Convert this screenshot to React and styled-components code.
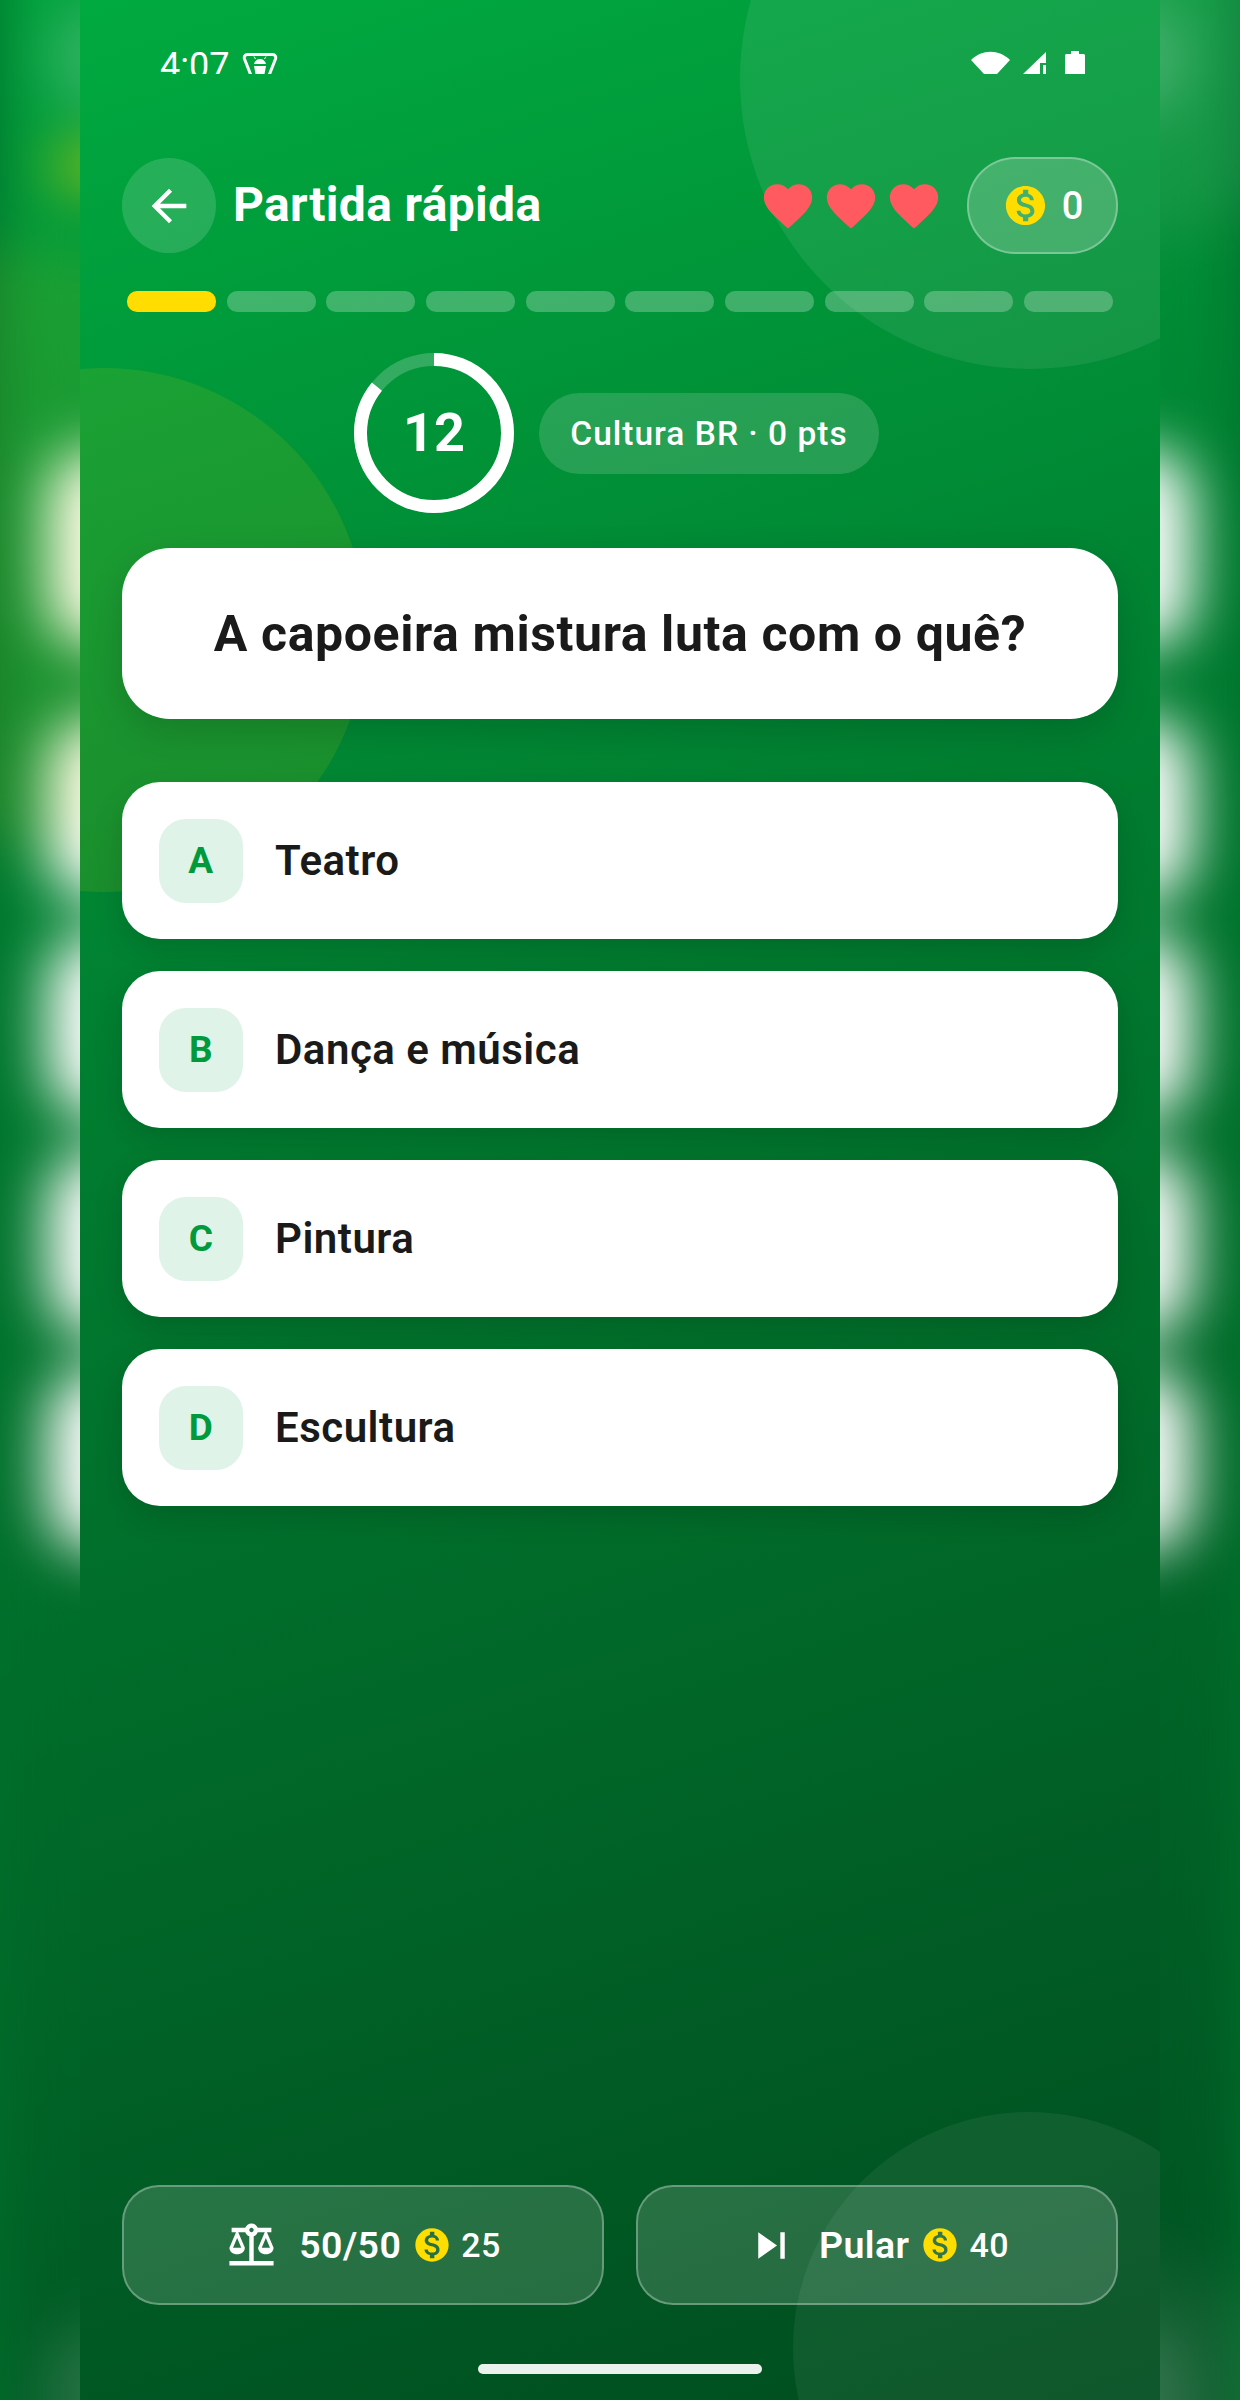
import styled, { createGlobalStyle } from 'styled-components'

const GlobalStyle = createGlobalStyle`
  html, body {
    margin: 0;
    padding: 0;
    height: 2400px;
    overflow: hidden;
    background: #00702c;
    font-family: Roboto, "Noto Sans", sans-serif;
  }
  * {
    box-sizing: border-box;
  }
`

const screenGradient = 'linear-gradient(162deg, #00aa40 0%, #007d30 40%, #004d1f 100%)'

const Page = styled.div`
  position: relative;
  width: 1240px;
  height: 2400px;
  overflow: hidden;
`

// blurred, enlarged ghost of the screen, only visible left and right of it
const Backdrop = styled.div`
  position: absolute;
  top: 0;
  left: 80px;
  width: 1080px;
  height: 2400px;
  padding: 157px 42px 95px;
  display: flex;
  flex-direction: column;
  background: ${screenGradient};
  transform: scale(1.148);
  filter: blur(25px);
`

const GhostHeader = styled.div`
  display: flex;
  justify-content: space-between;
`

const GhostRound = styled.div`
  width: ${props => props.$w}px;
  height: 96px;
  border-radius: 48px;
  background: rgba(255, 255, 255, 0.2);
`

const GhostSegment = styled.div`
  width: 89px;
  height: 21px;
  margin: 37px 0 0 5px;
  border-radius: 10px;
  background: #ffdd00;
`

const GhostCard = styled.div`
  height: ${props => props.$h}px;
  margin-top: ${props => props.$mt}px;
  border-radius: 40px;
  background: #fff;
`

const GhostFooter = styled.div`
  margin-top: auto;
  height: 120px;
  border-radius: 36px;
  background: rgba(255, 255, 255, 0.15);
`

const Screen = styled.div`
  position: relative;
  width: 1080px;
  height: 2400px;
  margin: 0 auto;
  overflow: hidden;
  display: flex;
  flex-direction: column;
  background: ${screenGradient};
`

const Blob = styled.div`
  position: absolute;
  left: ${props => props.$cx - props.$r}px;
  top: ${props => props.$cy - props.$r}px;
  width: ${props => props.$r * 2}px;
  height: ${props => props.$r * 2}px;
  border-radius: 50%;
  background: ${props => props.$color};
`

// the reference cuts the status bar off just under the clock's crossbar
const StatusBar = styled.div`
  position: relative;
  height: 74px;
  flex-shrink: 0;
  overflow: hidden;
  padding: 48px 75px 0 80px;
  display: flex;
  align-items: flex-start;
  color: #fff;
`

const Clock = styled.span`
  font-size: 36px;
  line-height: 36px;
  font-weight: 400;
  margin-right: 13px;
`

const NotifyIcon = styled.svg`
  width: 36px;
  height: 30px;
  margin-top: 5px;
`

const StatusIcons = styled.div`
  margin-left: auto;
  margin-top: 3px;
  display: flex;
  align-items: flex-start;
`

const WifiIcon = styled.svg`
  width: 39px;
  height: 30px;
  margin-right: 13px;
`

const SignalIcon = styled.svg`
  width: 23px;
  height: 30px;
  margin-right: 19px;
`

const BatteryIcon = styled.svg`
  width: 20px;
  height: 30px;
`

const Body = styled.div`
  position: relative;
  flex: 1;
  display: flex;
  flex-direction: column;
  padding: 83px 42px 0;
`

const Header = styled.header`
  display: flex;
  align-items: center;
  height: 97px;
`

const BackButton = styled.button`
  width: 94px;
  height: 95px;
  padding: 0;
  border: none;
  border-radius: 50%;
  display: flex;
  align-items: center;
  justify-content: center;
  background: rgba(255, 255, 255, 0.15);
  color: #fff;
`

const Title = styled.h1`
  margin: 0 0 2px 17px;
  font-size: 48px;
  letter-spacing: 0.35px;
  font-weight: 700;
  color: #fff;
`

const Hearts = styled.div`
  margin-left: auto;
  display: flex;
  gap: 5px;
  color: #ff5a5f;
`

const CoinPill = styled.div`
  width: 151px;
  height: 97px;
  margin-left: 24px;
  display: flex;
  align-items: center;
  justify-content: center;
  gap: 13px;
  border-radius: 48px;
  border: 2px solid rgba(255, 255, 255, 0.3);
  background: rgba(255, 255, 255, 0.2);
  font-size: 38px;
  font-weight: 500;
  color: #fff;
`

const Progress = styled.div`
  display: grid;
  grid-template-columns: repeat(10, 1fr);
  gap: 10.5px;
  margin: 37px 5px 0;
`

const Segment = styled.div`
  height: 21px;
  border-radius: 10px;
  background: ${props => (props.$active ? '#ffdd00' : 'rgba(255, 255, 255, 0.25)')};
`

const TimerRow = styled.div`
  margin-top: 41px;
  padding-right: 7px;
  display: flex;
  align-items: center;
  justify-content: center;
  gap: 25px;
`

const Timer = styled.div`
  display: grid;
  place-items: center;
  width: 160px;
  height: 160px;

  & > * {
    grid-area: 1 / 1;
  }
`

const TimerRing = styled.svg`
  width: 160px;
  height: 160px;
  transform: rotate(-90deg);
`

const TimerValue = styled.span`
  padding-bottom: 2px;
  font-size: 54px;
  font-weight: 700;
  color: #fff;
`

const CategoryChip = styled.div`
  height: 81px;
  width: 340px;
  display: flex;
  align-items: center;
  justify-content: center;
  border-radius: 41px;
  background: rgba(255, 255, 255, 0.15);
  font-size: 33.5px;
  letter-spacing: 1px;
  font-weight: 500;
  color: #fff;
`

const QuestionCard = styled.div`
  margin-top: 35px;
  height: 171px;
  display: flex;
  align-items: center;
  justify-content: center;
  border-radius: 48px;
  background: #fff;
  box-shadow: 0 12px 36px rgba(0, 0, 0, 0.16);
  font-size: 50px;
  letter-spacing: 0.6px;
  font-weight: 700;
  color: #1a1a1a;
`

const Options = styled.div`
  margin-top: 63px;
  display: flex;
  flex-direction: column;
  gap: 32px;
`

const Option = styled.div`
  height: 157px;
  padding-left: 37px;
  display: flex;
  align-items: center;
  gap: 32px;
  border-radius: 38px;
  background: #fff;
  box-shadow: 0 10px 30px rgba(0, 0, 0, 0.14);
  font-size: 42px;
  letter-spacing: 0.5px;
  font-weight: 600;
  color: #1a1a1a;
`

const OptionLetter = styled.div`
  width: 84px;
  height: 84px;
  display: flex;
  align-items: center;
  justify-content: center;
  border-radius: 27px;
  background: #dff3e8;
  font-size: 37px;
  font-weight: 700;
  color: #009a3d;
`

const Footer = styled.div`
  margin-top: auto;
  display: grid;
  grid-template-columns: 1fr 1fr;
  gap: 32px;
`

const PowerButton = styled.button`
  height: 120px;
  padding: 0;
  display: flex;
  align-items: center;
  justify-content: center;
  border-radius: 37px;
  border: 2px solid rgba(255, 255, 255, 0.3);
  background: rgba(255, 255, 255, 0.15);
  color: #fff;
  font-family: inherit;
`

const PowerLabel = styled.span`
  margin: 0 11px 0 21px;
  font-size: 37.5px;
  letter-spacing: 0.4px;
  font-weight: 600;
`

const PowerCost = styled.span`
  margin-left: 9px;
  font-size: 34px;
  letter-spacing: 0.4px;
  font-weight: 500;
`

const HomeBar = styled.div`
  width: 284px;
  height: 10px;
  margin: 59px auto 26px;
  border-radius: 5px;
  background: rgba(255, 255, 255, 0.92);
`

const Heart = () => (
  <svg width="58" height="58" viewBox="0 0 24 24" fill="currentColor">
    <path d="M12 21.35l-1.45-1.32C5.4 15.36 2 12.28 2 8.5 2 5.42 4.42 3 7.5 3c1.74 0 3.41.81 4.5 2.09C13.09 3.81 14.76 3 16.5 3 19.58 3 22 5.42 22 8.5c0 3.78-3.4 6.86-8.55 11.54L12 21.35z" />
  </svg>
)

const Coin = ({ size }) => (
  <svg width={size} height={size} viewBox="0 0 24 24" fill="#ffdd00">
    <path
      fillRule="evenodd"
      d="M12 2C6.48 2 2 6.48 2 12s4.48 10 10 10 10-4.48 10-10S17.52 2 12 2zm1.41 16.09V20h-2.67v-1.93c-1.71-.36-3.16-1.46-3.27-3.4h1.96c.1 1.05.82 1.87 2.65 1.87 1.96 0 2.4-.98 2.4-1.59 0-.83-.44-1.61-2.67-2.14-2.48-.6-4.18-1.62-4.18-3.67 0-1.72 1.39-2.84 3.11-3.21V4h2.67v1.95c1.86.45 2.79 1.86 2.85 3.39H14.3c-.05-1.11-.64-1.87-2.22-1.87-1.5 0-2.4.68-2.4 1.64 0 .84.65 1.39 2.67 1.91s4.18 1.39 4.18 3.91c-.01 1.83-1.38 2.83-3.12 3.16z"
    />
  </svg>
)

const BalanceIcon = () => (
  <svg width="53" height="53" viewBox="0 0 24 24" fill="currentColor">
    <path d="M13 7.83c.85-.3 1.53-.98 1.83-1.83H18l-3 7c0 1.66 1.57 3 3.5 3s3.5-1.34 3.5-3l-3-7h2V4h-6.17c-.41-1.17-1.52-2-2.83-2s-2.42.83-2.83 2H3v2h2l-3 7c0 1.66 1.57 3 3.5 3S9 14.66 9 13L6 6h3.17c.3.85.98 1.53 1.83 1.83V19H2v2h20v-2h-9V7.83zM20.37 13h-3.74l1.87-4.36L20.37 13zm-13 0H3.63L5.5 8.64 7.37 13zM12 6c-.55 0-1-.45-1-1 0-.55.45-1 1-1s1 .45 1 1c0 .55-.45 1-1 1z" />
  </svg>
)

const SkipIcon = () => (
  <svg width="53" height="53" viewBox="0 0 24 24" fill="currentColor">
    <path d="M6 18l8.5-6L6 6v12zM16 6v12h2V6h-2z" />
  </svg>
)

const BackArrow = () => (
  <svg width="52" height="52" viewBox="0 0 24 24" fill="currentColor">
    <path d="M20 11H7.83l5.59-5.59L12 4l-8 8 8 8 1.41-1.41L7.83 13H20v-2z" />
  </svg>
)

const TIMER_RADIUS = 73.5
const TIMER_LENGTH = 2 * Math.PI * TIMER_RADIUS

const options = [
  { letter: 'A', text: 'Teatro' },
  { letter: 'B', text: 'Dança e música' },
  { letter: 'C', text: 'Pintura' },
  { letter: 'D', text: 'Escultura' },
]

const Decor = () => (
  <>
    <Blob $cx={950} $cy={79} $r={290} $color="rgba(255, 255, 255, 0.08)" />
    <Blob $cx={24} $cy={630} $r={262} $color="rgba(255, 221, 0, 0.1)" />
    <Blob $cx={949} $cy={2348} $r={236} $color="rgba(255, 255, 255, 0.06)" />
  </>
)

export default function App() {
  const timeLeft = 12
  const timeTotal = 14

  return (
    <Page>
      <GlobalStyle />
      <Backdrop aria-hidden="true">
        <Decor />
        <GhostHeader>
          <GhostRound $w={94} />
          <GhostRound $w={151} />
        </GhostHeader>
        <GhostSegment />
        <GhostCard $h={171} $mt={236} />
        <GhostCard $h={157} $mt={63} />
        <GhostCard $h={157} $mt={32} />
        <GhostCard $h={157} $mt={32} />
        <GhostCard $h={157} $mt={32} />
        <GhostFooter />
      </Backdrop>
      <Screen>
        <Decor />
        <StatusBar>
          <Clock>4:07</Clock>
          <NotifyIcon viewBox="0 0 36 30" fill="none">
            <path
              d="M5.5 1.5h25c2.500 0 3.800 2.200 3 4.500l-7.500 19h-16L2.500 6C1.700 3.700 3 1.500 5.500 1.500z"
              stroke="#fff"
              strokeWidth="3"
            />
            <path d="M12 11c.6-3 3-5 6-5s5.400 2 6 5z" fill="#fff" />
            <path d="M13.500 6l-1.500-2.500M22.500 6l1.500-2.500" stroke="#fff" strokeWidth="1" />
            <path d="M12 13h12l-1.500 8h-9z" fill="#fff" />
          </NotifyIcon>
          <StatusIcons>
            <WifiIcon viewBox="0 0 39 30" fill="#fff">
              <path d="M0 9C11-2 28-2 39 9L19.500 30z" />
            </WifiIcon>
            <SignalIcon viewBox="0 0 23 30" fill="#fff">
              <path d="M23 1v11h-6v11H0z" />
              <rect x="20" y="14" width="3" height="10" />
            </SignalIcon>
            <BatteryIcon viewBox="0 0 20 30" fill="#fff">
              <path d="M6 0h8v3h4.500c.8 0 1.500.7 1.500 1.500V30H0V4.500C0 3.700.7 3 1.500 3H6z" />
            </BatteryIcon>
          </StatusIcons>
        </StatusBar>
        <Body>
          <Header>
            <BackButton aria-label="Voltar">
              <BackArrow />
            </BackButton>
            <Title>Partida rápida</Title>
            <Hearts>
              <Heart />
              <Heart />
              <Heart />
            </Hearts>
            <CoinPill>
              <Coin size={47} />
              0
            </CoinPill>
          </Header>
          <Progress>
            {Array.from({ length: 10 }, (_, i) => (
              <Segment key={i} $active={i === 0} />
            ))}
          </Progress>
          <TimerRow>
            <Timer>
              <TimerRing viewBox="0 0 160 160" fill="none" strokeWidth="13">
                <circle cx="80" cy="80" r={TIMER_RADIUS} stroke="rgba(255, 255, 255, 0.2)" />
                <circle
                  cx="80"
                  cy="80"
                  r={TIMER_RADIUS}
                  stroke="#fff"
                  strokeDasharray={`${(TIMER_LENGTH * timeLeft) / timeTotal} ${TIMER_LENGTH}`}
                />
              </TimerRing>
              <TimerValue>{timeLeft}</TimerValue>
            </Timer>
            <CategoryChip>Cultura BR · 0 pts</CategoryChip>
          </TimerRow>
          <QuestionCard>A capoeira mistura luta com o quê?</QuestionCard>
          <Options>
            {options.map(option => (
              <Option key={option.letter}>
                <OptionLetter>{option.letter}</OptionLetter>
                {option.text}
              </Option>
            ))}
          </Options>
          <Footer>
            <PowerButton>
              <BalanceIcon />
              <PowerLabel>50/50</PowerLabel>
              <Coin size={40} />
              <PowerCost>25</PowerCost>
            </PowerButton>
            <PowerButton>
              <SkipIcon />
              <PowerLabel>Pular</PowerLabel>
              <Coin size={40} />
              <PowerCost>40</PowerCost>
            </PowerButton>
          </Footer>
          <HomeBar />
        </Body>
      </Screen>
    </Page>
  )
}
